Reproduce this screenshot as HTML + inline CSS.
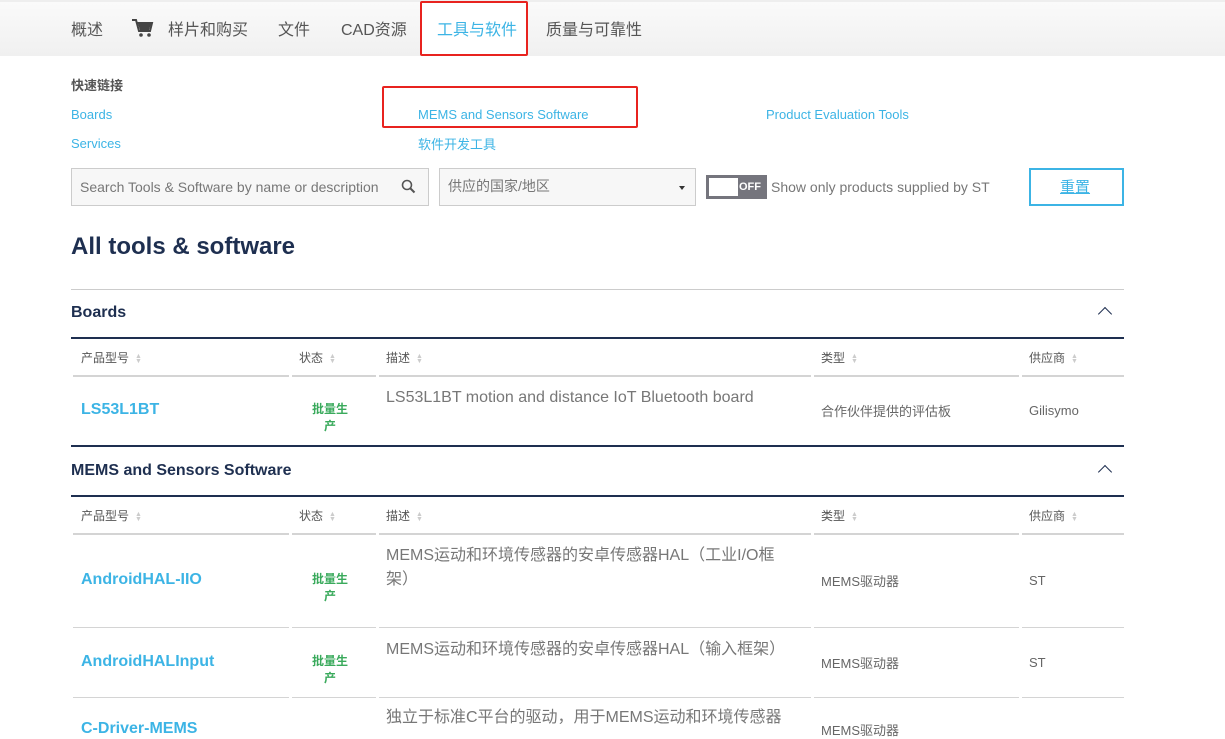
<!DOCTYPE html>
<html><head><meta charset="utf-8"><style>
*{margin:0;padding:0;box-sizing:border-box}
body{width:1225px;height:727px;overflow:hidden;background:#fff;font-family:"Liberation Sans","Noto Sans CJK SC",sans-serif;position:relative}
.a{position:absolute;white-space:nowrap}
.nav{position:absolute;left:0;top:0;width:1225px;height:56px;background:linear-gradient(#fafafa,#f0f0f0);border-top:2px solid #eee}
.nt{position:absolute;top:16px;font-size:16px;color:#555}
.lk{font-size:13px;color:#3cb4e5}
.hd{font-size:12px;color:#555}
.sort{display:inline-block;margin-left:6px;font-size:7px;color:#ccc;line-height:5px;vertical-align:middle}
.cl{position:absolute;height:2px;background:#d4d4d4}
.nl{position:absolute;left:71px;width:1053px;height:2px;background:#1e2f50}
.pn{font-size:16px;font-weight:bold;color:#3cb4e5}
.st{font-size:12px;color:#3aaa5c;font-weight:bold;text-align:center;width:40px;line-height:17px;white-space:normal}
.ds{font-size:16px;color:#777;line-height:24px}
.sm{font-size:13px;color:#666}
.sec{font-size:16px;font-weight:bold;color:#1e2f50}
.chev{position:absolute;width:10px;height:10px;border-left:1.5px solid #1e2f50;border-top:1.5px solid #1e2f50;transform:rotate(45deg)}
</style></head><body>
<div class="nav"></div>
<div class="a nt" style="left:71px">概述</div>
<svg class="a" style="left:132px;top:18px" width="22" height="20" viewBox="0 0 22 20"><path d="M0 2h4l3 11h11l2-8H5" fill="none" stroke="#444" stroke-width="2"/><path d="M6 6h13l-2 6H8z" fill="#444"/><circle cx="9" cy="17" r="1.8" fill="#444"/><circle cx="17" cy="17" r="1.8" fill="#444"/></svg>
<div class="a nt" style="left:168px">样片和购买</div>
<div class="a nt" style="left:278px">文件</div>
<div class="a nt" style="left:341px">CAD资源</div>
<div class="a" style="left:420px;top:1px;width:108px;height:55px;background:#fff;border:2px solid #e8231f;border-radius:2px"></div>
<div class="a nt" style="left:437px;color:#3cb4e5">工具与软件</div>
<div class="a nt" style="left:546px">质量与可靠性</div>

<div class="a" style="left:71px;top:75px;font-size:13px;color:#555;font-weight:bold">快速链接</div>
<div class="a lk" style="left:71px;top:107px">Boards</div>
<div class="a lk" style="left:71px;top:136px">Services</div>
<div class="a" style="left:382px;top:86px;width:256px;height:42px;border:2px solid #e8231f;border-radius:2px"></div>
<div class="a lk" style="left:418px;top:107px">MEMS and Sensors Software</div>
<div class="a lk" style="left:418px;top:134px">软件开发工具</div>
<div class="a lk" style="left:766px;top:107px">Product Evaluation Tools</div>

<div class="a" style="left:71px;top:168px;width:358px;height:38px;border:1px solid #ccc;background:#f7f7f7"></div>
<div class="a" style="left:80px;top:179px;font-size:14px;color:#777">Search Tools &amp; Software by name or description</div>
<svg class="a" style="left:401px;top:179px" width="15" height="15" viewBox="0 0 15 15"><circle cx="6" cy="6" r="4.5" fill="none" stroke="#555" stroke-width="1.6"/><path d="M9.5 9.5l4 4" stroke="#555" stroke-width="2"/></svg>
<div class="a" style="left:439px;top:168px;width:257px;height:38px;border:1px solid #ccc;background:#f7f7f7"></div>
<div class="a" style="left:448px;top:176px;font-size:14px;color:#777">供应的国家/地区</div>
<div class="a" style="left:679px;top:186px;border:3px solid transparent;border-top:4px solid #333"></div>
<div class="a" style="left:706px;top:175px;width:61px;height:24px;background:#75757d"></div>
<div class="a" style="left:709px;top:178px;width:29px;height:18px;background:#fff"></div>
<div class="a" style="left:739px;top:181px;font-size:11px;font-weight:bold;color:#fff">OFF</div>
<div class="a" style="left:771px;top:179px;font-size:14px;color:#777">Show only products supplied by ST</div>
<div class="a" style="left:1029px;top:168px;width:95px;height:38px;border:2px solid #3cb4e5"></div>
<div class="a" style="left:1060px;top:176px;font-size:15px;color:#3cb4e5;text-decoration:underline">重置</div>

<div class="a" style="left:71px;top:233px;font-size:24px;font-weight:bold;color:#1e2f50">All tools &amp; software</div>
<div class="a" style="left:71px;top:289px;width:1053px;height:1px;background:#ccc"></div>

<div class="a sec" style="left:71px;top:304px">Boards</div>
<div class="chev" style="left:1100px;top:309px"></div>
<div class="nl" style="top:337px"></div>

<div class="a hd" style="left:81px;top:349px">产品型号<span class="sort">▲<br>▼</span></div>
<div class="a hd" style="left:299px;top:349px">状态<span class="sort">▲<br>▼</span></div>
<div class="a hd" style="left:386px;top:349px">描述<span class="sort">▲<br>▼</span></div>
<div class="a hd" style="left:821px;top:349px">类型<span class="sort">▲<br>▼</span></div>
<div class="a hd" style="left:1029px;top:349px">供应商<span class="sort">▲<br>▼</span></div>
<div class="cl" style="left:73px;top:375px;width:216px"></div><div class="cl" style="left:292px;top:375px;width:84px"></div><div class="cl" style="left:379px;top:375px;width:432px"></div><div class="cl" style="left:814px;top:375px;width:205px"></div><div class="cl" style="left:1022px;top:375px;width:102px"></div>

<div class="a pn" style="left:81px;top:401px">LS53L1BT</div>
<div class="a st" style="left:310px;top:401px">批量生产</div>
<div class="a ds" style="left:386px;top:386px">LS53L1BT motion and distance IoT Bluetooth board</div>
<div class="a sm" style="left:821px;top:401px">合作伙伴提供的评估板</div>
<div class="a sm" style="left:1029px;top:403px">Gilisymo</div>
<div class="nl" style="top:445px"></div>

<div class="a sec" style="left:71px;top:462px">MEMS and Sensors Software</div>
<div class="chev" style="left:1100px;top:467px"></div>
<div class="nl" style="top:495px"></div>

<div class="a hd" style="left:81px;top:507px">产品型号<span class="sort">▲<br>▼</span></div>
<div class="a hd" style="left:299px;top:507px">状态<span class="sort">▲<br>▼</span></div>
<div class="a hd" style="left:386px;top:507px">描述<span class="sort">▲<br>▼</span></div>
<div class="a hd" style="left:821px;top:507px">类型<span class="sort">▲<br>▼</span></div>
<div class="a hd" style="left:1029px;top:507px">供应商<span class="sort">▲<br>▼</span></div>
<div class="cl" style="left:73px;top:533px;width:216px"></div><div class="cl" style="left:292px;top:533px;width:84px"></div><div class="cl" style="left:379px;top:533px;width:432px"></div><div class="cl" style="left:814px;top:533px;width:205px"></div><div class="cl" style="left:1022px;top:533px;width:102px"></div>

<div class="a pn" style="left:81px;top:571px">AndroidHAL-IIO</div>
<div class="a st" style="left:310px;top:571px">批量生产</div>
<div class="a ds" style="left:386px;top:544px">MEMS运动和环境传感器的安卓传感器HAL（工业I/O框<br>架）</div>
<div class="a sm" style="left:821px;top:571px">MEMS驱动器</div>
<div class="a sm" style="left:1029px;top:573px">ST</div>
<div class="cl" style="left:73px;top:627px;width:216px;height:1px"></div><div class="cl" style="left:292px;top:627px;width:84px;height:1px"></div><div class="cl" style="left:379px;top:627px;width:432px;height:1px"></div><div class="cl" style="left:814px;top:627px;width:205px;height:1px"></div><div class="cl" style="left:1022px;top:627px;width:102px;height:1px"></div>

<div class="a pn" style="left:81px;top:653px">AndroidHALInput</div>
<div class="a st" style="left:310px;top:653px">批量生产</div>
<div class="a ds" style="left:386px;top:638px">MEMS运动和环境传感器的安卓传感器HAL（输入框架）</div>
<div class="a sm" style="left:821px;top:653px">MEMS驱动器</div>
<div class="a sm" style="left:1029px;top:655px">ST</div>
<div class="cl" style="left:73px;top:697px;width:216px;height:1px"></div><div class="cl" style="left:292px;top:697px;width:84px;height:1px"></div><div class="cl" style="left:379px;top:697px;width:432px;height:1px"></div><div class="cl" style="left:814px;top:697px;width:205px;height:1px"></div><div class="cl" style="left:1022px;top:697px;width:102px;height:1px"></div>

<div class="a ds" style="left:386px;top:706px">独立于标准C平台的驱动，用于MEMS运动和环境传感器</div>
<div class="a pn" style="left:81px;top:720px">C-Driver-MEMS</div>
<div class="a sm" style="left:821px;top:720px">MEMS驱动器</div>
</body></html>
